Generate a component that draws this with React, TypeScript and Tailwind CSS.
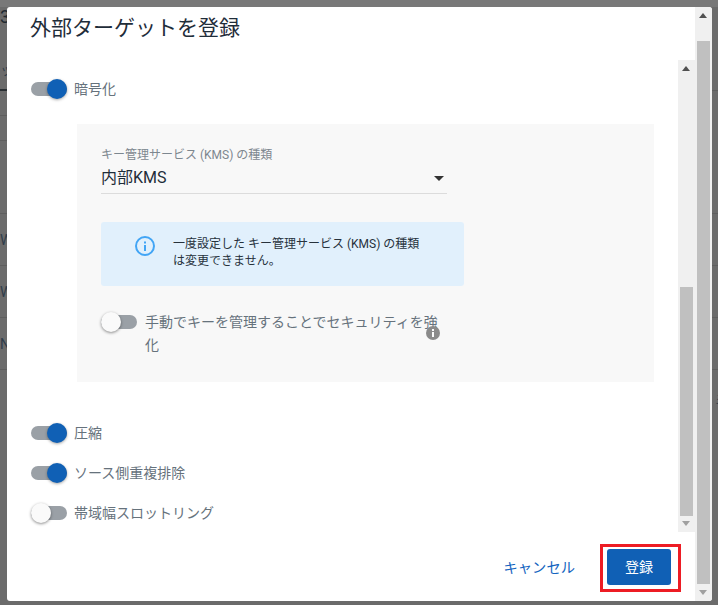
import { ReactElement, ReactNode } from "react";

const FONT = "font-['Roboto','Noto_Sans_CJK_JP',sans-serif]";

function Toggle({ on }: { on: boolean }): ReactElement {
  return (
    <div className="relative h-5 w-9 shrink-0">
      <div className="absolute left-0 right-0 top-[3px] h-[14px] rounded-full bg-[#9aa0a6]" />
      {on ? (
        <div className="absolute right-0 top-0 size-5 rounded-full bg-[#1060b5] shadow-[0_1px_3px_rgba(0,0,0,0.35)]" />
      ) : (
        <div className="absolute left-0 top-0 size-5 rounded-full bg-[#fafafa] shadow-[0_1px_3px_rgba(0,0,0,0.45)]" />
      )}
    </div>
  );
}

function ToggleRow({ on, children }: { on: boolean; children: ReactNode }) {
  return (
    <div className="flex h-5 items-center gap-[7px]">
      <Toggle on={on} />
      <span className="text-sm leading-5 text-[#66727c]">{children}</span>
    </div>
  );
}

// Native-looking scrollbar used by both the dialog and its body
function Scrollbar({
  thumbTop,
  thumbHeight,
}: {
  thumbTop: number;
  thumbHeight: number;
}) {
  return (
    <div className="relative h-full w-[17px] shrink-0 bg-[#f0f0f0]">
      <div className="absolute left-[4px] top-[6px] h-0 w-0 border-x-[4.5px] border-b-[5px] border-x-transparent border-b-[#505050]" />
      <div
        className="absolute left-[2px] w-[13px] bg-[#c0c0c0]"
        style={{ top: thumbTop, height: thumbHeight }}
      />
      <div className="absolute bottom-[6px] left-[4px] h-0 w-0 border-x-[4.5px] border-t-[5px] border-x-transparent border-t-[#a0a0a0]" />
    </div>
  );
}

// Rules of the dimmed table behind the dialog
const LEFT_RULES = ["top-[115px]", "top-[140px]", "top-[213px]", "top-[265px]", "top-[317px]", "top-[369px]"];
const RIGHT_RULES = ["top-[90px]", "top-[213px]", "top-[265px]", "top-[317px]", "top-[369px]"];

export default function App(): ReactElement {
  return (
    <div className={`relative h-[605px] w-[718px] overflow-hidden bg-[#6b6b6b] ${FONT}`}>
      {/* Dimmed page behind the dialog */}
      <div className="absolute inset-x-0 top-0 h-[7px] bg-[#787878]" />
      <div className="absolute left-0 top-[89px] h-[2px] w-[7px] bg-[#2a2f33]" />
      {LEFT_RULES.map((top) => (
        <div key={top} className={`absolute left-0 h-px w-[7px] bg-[#5e5e5e] ${top}`} />
      ))}
      {RIGHT_RULES.map((top) => (
        <div key={top} className={`absolute right-0 h-px w-[6px] bg-[#5e5e5e] ${top}`} />
      ))}
      <span className="absolute left-0 top-[5px] text-[18px] leading-6 text-[#1f2830]">3</span>
      <span className="absolute left-0 top-[60px] text-sm leading-5 text-[#2f3c4a]">ッ</span>
      <span className="absolute left-0 top-[230px] text-sm leading-5 text-[#2f3c4a]">W</span>
      <span className="absolute left-0 top-[282px] text-sm leading-5 text-[#2f3c4a]">W</span>
      <span className="absolute left-0 top-[334px] text-sm leading-5 text-[#2f3c4a]">N</span>
      <span className="absolute left-[714px] top-[390px] text-sm leading-5 text-[#2f3c4a]">ミ</span>

      <div className="absolute left-[7px] top-[7px] flex h-[594px] w-[705px] overflow-hidden rounded-[3px] bg-white">
        <div className="flex min-w-0 flex-1 flex-col">
          <h2 className="h-[53px] shrink-0 pl-[23px] pt-[6px] text-[21px] font-normal leading-[30px] text-[#1f2d3a]">
            外部ターゲットを登録
          </h2>

          <div className="flex h-[472px] shrink-0">
            <div className="min-w-0 flex-1 pl-6 pr-6 pt-[19px]">
              <ToggleRow on>暗号化</ToggleRow>

              <div className="ml-[46px] mt-[25px] h-[258px] bg-[#f8f8f8] pl-6 pt-[24px]">
                <div className="w-[346px]">
                  <div className="text-xs leading-[15px] text-[#7d878f]">
                    キー管理サービス (KMS) の種類
                  </div>
                  <div className="flex h-[31px] items-center justify-between border-b border-[#dcdcdc] pr-[3px]">
                    <span className="text-base leading-6 text-[#1f2d3a]">内部KMS</span>
                    <span className="h-0 w-0 border-x-[5px] border-t-[5px] border-x-transparent border-t-[#333]" />
                  </div>
                </div>

                <div className="mt-[28px] flex h-[64px] w-[363px] rounded-[3px] bg-[#e1f0fc] pl-[34px] pt-[14px]">
                  <svg width="20" height="20" viewBox="0 0 20 20" className="shrink-0">
                    <circle cx="10" cy="10" r="9" fill="none" stroke="#42a5f5" strokeWidth="2" />
                    <rect x="9" y="9" width="2" height="6" fill="#42a5f5" />
                    <rect x="9" y="5.5" width="2" height="2" fill="#42a5f5" />
                  </svg>
                  <p className="ml-[18px] w-[250px] text-xs leading-[17px] text-[#27323c]">
                    一度設定した キー管理サービス (KMS) の種類 は変更できません。
                  </p>
                </div>

                <div className="mt-[26px] flex w-[346px] items-start gap-2">
                  <Toggle on={false} />
                  <div className="relative">
                    <p className="-mt-px w-[297px] text-sm leading-[23px] text-[#66727c]">
                      手動でキーを管理することでセキュリティを強化
                    </p>
                    <svg
                      width="14"
                      height="14"
                      viewBox="0 0 14 14"
                      className="absolute left-[281px] top-[14px]"
                    >
                      <circle cx="7" cy="7" r="7" fill="#8a8a8a" />
                      <rect x="6" y="6" width="2" height="5" fill="#fafafa" />
                      <rect x="6" y="3" width="2" height="2" fill="#fafafa" />
                    </svg>
                  </div>
                </div>
              </div>

              <div className="mt-[41px] flex flex-col gap-5">
                <ToggleRow on>圧縮</ToggleRow>
                <ToggleRow on>ソース側重複排除</ToggleRow>
                <ToggleRow on={false}>帯域幅スロットリング</ToggleRow>
              </div>
            </div>
            <Scrollbar thumbTop={227} thumbHeight={229} />
          </div>

          <div className="relative flex flex-1 items-start justify-end pr-[24px] pt-[17px]">
            <button className="mr-[32px] mt-[9px] text-[14.3px] leading-5 text-[#1565c0]">キャンセル</button>
            <button className="h-9 w-16 rounded-[3px] bg-[#1060b5] text-sm text-white">登録</button>
            {/* Red annotation frame around the submit button */}
            <div className="absolute right-[14px] top-[12px] h-[48px] w-[81px] border-[3px] border-[#ed1c24]" />
          </div>
        </div>
        <Scrollbar thumbTop={34} thumbHeight={543} />
      </div>
    </div>
  );
}
